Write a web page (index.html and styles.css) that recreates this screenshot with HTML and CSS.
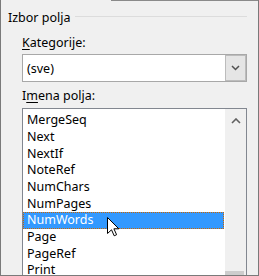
FILE: index.html
```html
<!DOCTYPE html>
<html lang="hr">
<head>
    <meta charset="UTF-8">
    <title>Izbor polja</title>
    <link rel="stylesheet" href="styles.css">
</head>
<body>
    <div class="frame">
        <!-- Group header -->
        <div class="group-header">
            <span class="group-title">Izbor polja</span>
            <span class="group-line"></span>
        </div>

        <div class="group-body">
            <label class="field-label"><u>K</u>ategorije:</label>
            <div class="combo">
                <span class="combo-value">(sve)</span>
                <span class="combo-button">
                    <svg width="9" height="6" viewBox="0 0 9 6">
                        <path d="M1 1 L4.5 4.5 L8 1" fill="none" stroke="#505050" stroke-width="1.5"/>
                    </svg>
                </span>
            </div>

            <label class="field-label names-label">I<u>m</u>ena polja:</label>
            <div class="listbox">
                <ul class="list-items">
                    <li>MergeSeq</li>
                    <li>Next</li>
                    <li>NextIf</li>
                    <li>NoteRef</li>
                    <li>NumChars</li>
                    <li>NumPages</li>
                    <li class="selected">NumWords
                        <svg class="cursor" width="13" height="20" viewBox="0 0 13 20">
                            <path d="M0.5 0.5 L0.5 16.5 L4.5 12.8 L7.2 18.8 L9.6 17.7 L6.9 11.8 L11.8 11.8 Z" fill="#fff" stroke="#000" stroke-width="1" stroke-linejoin="miter"/>
                        </svg>
                    </li>
                    <li>Page</li>
                    <li>PageRef</li>
                    <li>Print</li>
                </ul>
                <div class="scrollbar">
                    <span class="scroll-up">
                        <svg width="10" height="6" viewBox="0 0 10 6">
                            <path d="M1 5 L5 1 L9 5" fill="none" stroke="#606060" stroke-width="1.6"/>
                        </svg>
                    </span>
                    <span class="scroll-thumb"></span>
                </div>
            </div>
        </div>
    </div>
</body>
</html>
```

FILE: styles.css
```css
html, body {
    margin: 0;
    padding: 0;
}

body {
    background-color: #f0f0f0;
    font-family: "Noto Sans", "Open Sans", sans-serif;
    font-size: 12.5px;
    color: #000;
}

.frame {
    position: relative;
    box-sizing: border-box;
    width: 259px;
    height: 276px;
    border-left: 1px solid #7a7a7a;
    border-right: 1px solid #7a7a7a;
    border-bottom: 1px solid #7a7a7a;
    overflow: hidden;
}

.frame::before {
    content: "";
    position: absolute;
    top: 0;
    left: 110px;
    right: 0;
    height: 1px;
    background-color: #8a8a8a;
}

/* Group box header */
.group-header {
    display: flex;
    align-items: flex-start;
    margin-top: 10px;
    padding-left: 7px;
    height: 16px;
    line-height: 16px;
}

.group-line {
    flex: 1;
    height: 1px;
    margin-top: 6px;
    margin-left: 4px;
    margin-right: 11px;
    background-color: #dcdcdc;
}

.group-body {
    display: flex;
    flex-direction: column;
    padding-left: 21px;
    padding-right: 11px;
}

.field-label {
    display: block;
    line-height: 16px;
    margin-top: 9px;
}

.field-label u {
    text-decoration-thickness: 1px;
    text-underline-offset: 2px;
}

.names-label {
    margin-top: 6px;
}

/* Combo box */
.combo {
    display: flex;
    align-items: center;
    height: 28px;
    box-sizing: border-box;
    margin-top: 3px;
    border: 1px solid #a8a8a8;
    background-color: #fff;
}

.combo-value {
    flex: 1;
    padding-left: 4px;
    line-height: 16px;
    padding-top: 1px;
}

.combo-button {
    display: flex;
    align-items: center;
    justify-content: center;
    align-self: stretch;
    width: 21px;
    box-sizing: border-box;
    border: 1px solid #bcbcbc;
    background-color: #e5e5e5;
}

/* List box */
.listbox {
    display: flex;
    margin-top: 4px;
    height: 260px;
    flex-shrink: 0;
    border: 1px solid #828790;
    background-color: #fff;
}

.list-items {
    flex: 1;
    list-style: none;
    margin: 0;
    padding: 3.3px 1px 0 0;
}

.list-items li {
    position: relative;
    box-sizing: border-box;
    height: 16.67px;
    line-height: 16.67px;
    padding-left: 4px;
    white-space: nowrap;
}

.list-items li.selected {
    background-color: #3399ff;
    color: #fff;
    outline: 1px dotted #cc6600;
    outline-offset: -1px;
}

.cursor {
    position: absolute;
    left: 84px;
    top: 5px;
}

.scrollbar {
    display: flex;
    flex-direction: column;
    width: 21px;
    background-color: #f0f0f0;
}

.scroll-up {
    display: flex;
    align-items: center;
    justify-content: center;
    flex-shrink: 0;
    height: 24px;
}

.scroll-thumb {
    display: block;
    flex-shrink: 0;
    width: 19px;
    height: 80px;
    margin-top: 138px;
    background-color: #cdcdcd;
}
```
